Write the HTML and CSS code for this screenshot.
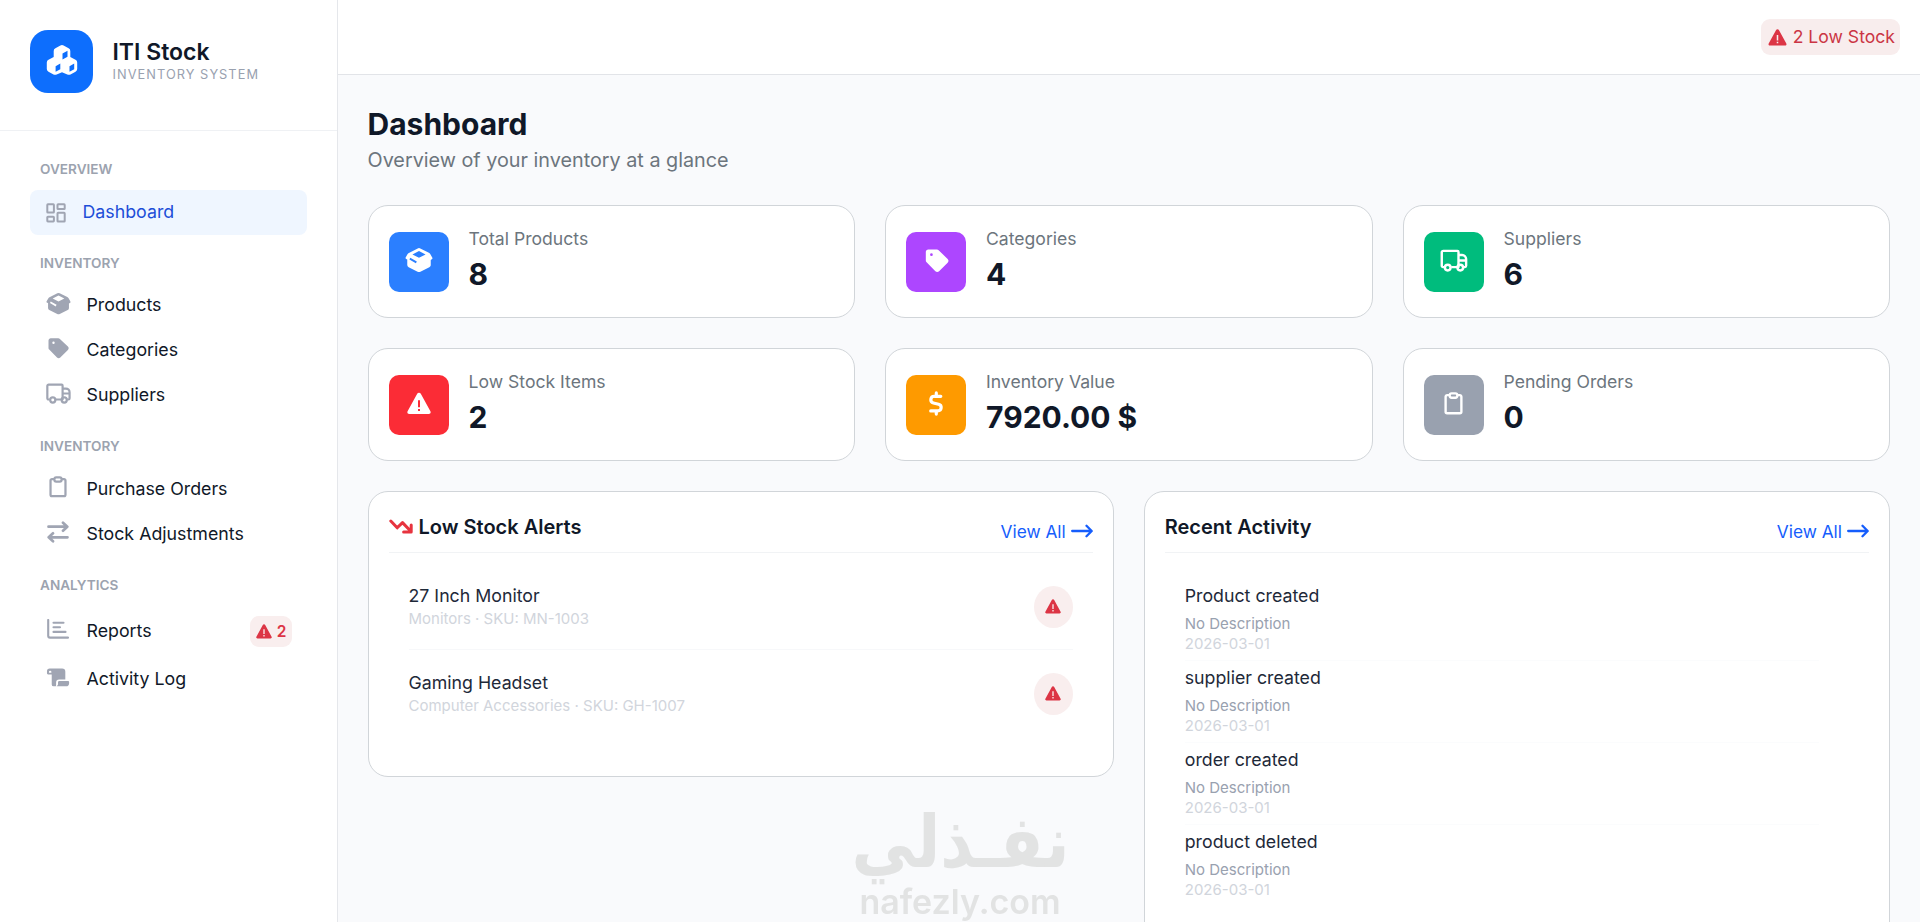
FILE: index.html
```html
<!DOCTYPE html>
<html lang="en">
<head>
    <meta charset="UTF-8">
    <meta name="viewport" content="width=device-width, initial-scale=1.0">
    <title>ITI Stock</title>
    <link rel="stylesheet" href="styles.css">
</head>
<body>
    <!-- icon sprite -->
    <svg class="sprite" aria-hidden="true">
        <symbol id="i-cubes" viewBox="0 0 32 30">
            <path fill-rule="evenodd" d="M14.400.5a3.400 3.400 0 0 1 3.200 0l5 2.700a3 3 0 0 1 1.700 2.700v6l5.200 2.800a3 3 0 0 1 1.700 2.700v6.600a3 3 0 0 1-1.700 2.700l-5 2.700a3.400 3.400 0 0 1-3.200 0L16 27.200l-5.300 2.200a3.400 3.400 0 0 1-3.200 0l-5-2.700A3 3 0 0 1 .8 24v-6.600a3 3 0 0 1 1.700-2.700l5.200-2.800v-6a3 3 0 0 1 1.700-2.700zM16.500 8.400v6l5-2.600v-6zM9.600 21.200v5.600l4.700-2.600v-5.600zM23.500 21.200v5.600l4.700-2.600v-5.600z"/>
        </symbol>
        <symbol id="i-grid" viewBox="0 0 20 20">
            <g fill="none" stroke="currentColor" stroke-width="2" stroke-linejoin="round"><rect x="1.300" y="1.300" width="6.600" height="8.200" rx=".6"/><rect x="11.500" y="1.300" width="7.200" height="4.700" rx=".6"/><rect x="1.300" y="13.700" width="6.600" height="4.700" rx=".6"/><rect x="11.500" y="9.800" width="7.200" height="8.700" rx=".6"/></g>
        </symbol>
        <symbol id="i-box" viewBox="0 0 26 24">
            <path fill-rule="evenodd" d="M11.800 1.300a2.400 2.400 0 0 1 2.400 0l8 4c.7.400 1.200.9 1.500 1.500l1.700 3.100c.3.600.1 1.200-.5 1.500l-1 .5v4.700c0 .9-.5 1.700-1.300 2.100l-8.300 4.200a2.800 2.800 0 0 1-2.600 0l-8.300-4.200a2.400 2.400 0 0 1-1.300-2.100v-5l-1-.5c-.6-.3-.8-.9-.5-1.500l1.700-2.900c.3-.5.700-.9 1.300-1.200zM13 3.600 6.900 6.800 13 10l6.100-3.200zM4.900 9.800l-.8 1.700 6 3.500.9-1.700z"/>
        </symbol>
        <symbol id="i-tag" viewBox="0 0 24 24">
            <path fill-rule="evenodd" d="M2.500 4.500C2.500 3.200 3.500 2.200 4.700 2.200h7.600c.6 0 1.200.2 1.600.700l8 7.700c1 1 1 2.400 0 3.400l-7.600 7.600c-1 .9-2.300.9-3.300 0l-7.800-8c-.5-.5-.7-1-.7-1.700zm5 1.100a1.200 1.200 0 1 0 0 2.400 1.200 1.200 0 0 0 0-2.400z"/>
        </symbol>
        <symbol id="i-truck" viewBox="0 0 26 22">
            <g fill="none" stroke="currentColor" stroke-width="2.300" stroke-linejoin="round"><path d="M3.600 17.300H2.500a1.200 1.200 0 0 1-1.200-1.200V3.200A1.400 1.400 0 0 1 2.700 1.800h13.600a1 1 0 0 1 1 1v14.500h-7M17.300 5.800h3.500a3.800 3.800 0 0 1 3.800 3.800v6.500a1.200 1.200 0 0 1-1.200 1.200h-1.200M17.300 11h7.300"/><circle cx="7" cy="17.800" r="2.700"/><circle cx="19" cy="17.800" r="2.700"/></g>
        </symbol>
        <symbol id="i-clip" viewBox="0 0 20 24">
            <g fill="none" stroke="currentColor" stroke-width="2.500" stroke-linejoin="round"><path d="M6 3.200H3.300A1.600 1.600 0 0 0 1.700 4.800v15.800a1.600 1.600 0 0 0 1.600 1.600h13.400a1.600 1.600 0 0 0 1.600-1.600V4.800a1.600 1.600 0 0 0-1.600-1.600H14"/><rect x="6" y="1.300" width="8" height="4.600" rx="2"/></g>
        </symbol>
        <symbol id="i-swap" viewBox="0 0 22 22">
            <path fill="none" stroke="currentColor" stroke-width="2.700" stroke-linecap="round" stroke-linejoin="round" d="M1.500 5.700h18M16 1.700l4.300 4-4.300 4M20.500 16.300h-18M6 12.300l-4.300 4 4.300 4"/>
        </symbol>
        <symbol id="i-chart" viewBox="0 0 22 20">
            <path fill="none" stroke="currentColor" stroke-width="2.100" stroke-linecap="round" stroke-linejoin="round" d="M1.200 1v15.800a1.800 1.800 0 0 0 1.800 1.800h18M6.500 3.700h10M6.500 8.300h6.500M6.500 12.900h12"/>
        </symbol>
        <symbol id="i-scroll" viewBox="0 0 24 20">
            <path fill-rule="evenodd" d="M3.300.4h13a3.400 3.400 0 0 1 3.400 3.400v8.400h-6.500a3.200 3.200 0 0 0-3.200 3.200v2.900a1 1 0 0 1-1 1H7.400a2 2 0 0 1-2-2V6.800H1.500A1.200 1.200 0 0 1 .4 5.600V3.300A2.900 2.900 0 0 1 3.300.4zm.4 2.400a1.200 1.200 0 0 0-1.200 1.200v1h2.500V4a1.200 1.200 0 0 0-1.300-1.200z"/>
            <path d="M13.400 13.800h9.300c.6 0 1 .4 1 1v1.200a3.300 3.300 0 0 1-3.300 3.300h-10c1.100-.6 1.600-1.400 1.600-2.400v-1.700c0-.8.500-1.400 1.400-1.400z"/>
        </symbol>
        <symbol id="i-alert" viewBox="0 0 24 22">
            <path fill-rule="evenodd" d="M13.800 1.300a2 2 0 0 0-3.600 0L.6 18.800c-.7 1.300.1 2.700 1.600 2.700h19.600c1.500 0 2.300-1.400 1.600-2.700zM11 7.800h2v7h-2zm0 8.600h2v2.200h-2z"/>
        </symbol>
        <symbol id="i-dollar" viewBox="0 0 16 26">
            <path fill="none" stroke="currentColor" stroke-width="3.300" stroke-linecap="round" stroke-linejoin="round" d="M13 5.500H6.200a3.500 3.500 0 0 0-.9 6.900l5.400 1.400a3.500 3.500 0 0 1-.8 6.900H2.500M8.300 2v3M8.300 21v3"/>
        </symbol>
        <symbol id="i-down" viewBox="0 0 24 16">
            <path fill="none" stroke="currentColor" stroke-width="3" stroke-linecap="round" stroke-linejoin="round" d="M1.800 2l6.400 6.800 5.300-5.200 8.300 8.600M22.200 6v7h-7.600"/>
        </symbol>
        <symbol id="i-arrow" viewBox="0 0 22 14">
            <path fill="none" stroke="currentColor" stroke-width="2.300" stroke-linecap="round" stroke-linejoin="round" d="M1.200 7h19.300M15.500 1.800 20.700 7 15.500 12.200"/>
        </symbol>
    </svg>

    <div class="layout">
        <aside class="sidebar">
            <div class="brand">
                <div class="brand-logo"><svg><use href="#i-cubes"/></svg></div>
                <div class="brand-text">
                    <div class="brand-name">ITI Stock</div>
                    <div class="brand-sub">INVENTORY SYSTEM</div>
                </div>
            </div>
            <nav class="menu">
                <div class="menu-title overview">OVERVIEW</div>
                <a class="menu-item active"><svg class="w20"><use href="#i-grid"/></svg>Dashboard</a>

                <div class="menu-title">INVENTORY</div>
                <a class="menu-item"><svg class="box"><use href="#i-box"/></svg>Products</a>
                <a class="menu-item"><svg class="tag"><use href="#i-tag"/></svg>Categories</a>
                <a class="menu-item"><svg class="truck"><use href="#i-truck"/></svg>Suppliers</a>

                <div class="menu-title orders">INVENTORY</div>
                <a class="menu-item"><svg class="clip"><use href="#i-clip"/></svg>Purchase Orders</a>
                <a class="menu-item"><svg class="swap"><use href="#i-swap"/></svg>Stock Adjustments</a>

                <div class="menu-title analytics">ANALYTICS</div>
                <a class="menu-item reports"><svg class="chart"><use href="#i-chart"/></svg>Reports
                    <span class="menu-badge"><svg><use href="#i-alert"/></svg>2</span></a>
                <a class="menu-item"><svg class="scroll"><use href="#i-scroll"/></svg>Activity Log</a>
            </nav>
        </aside>

        <div class="main">
            <header class="topbar">
                <span class="low-badge"><svg><use href="#i-alert"/></svg>2 Low Stock</span>
            </header>

            <main class="content">
                <h1 class="page-title">Dashboard</h1>
                <p class="page-sub">Overview of your inventory at a glance</p>

                <div class="stats">
                    <div class="stat">
                        <div class="stat-icon blue"><svg class="box"><use href="#i-box"/></svg></div>
                        <div><div class="stat-label">Total Products</div><div class="stat-value">8</div></div>
                    </div>
                    <div class="stat">
                        <div class="stat-icon purple"><svg class="tag"><use href="#i-tag"/></svg></div>
                        <div><div class="stat-label">Categories</div><div class="stat-value">4</div></div>
                    </div>
                    <div class="stat">
                        <div class="stat-icon green"><svg class="truck"><use href="#i-truck"/></svg></div>
                        <div><div class="stat-label">Suppliers</div><div class="stat-value">6</div></div>
                    </div>
                    <div class="stat">
                        <div class="stat-icon red"><svg class="alert"><use href="#i-alert"/></svg></div>
                        <div><div class="stat-label">Low Stock Items</div><div class="stat-value">2</div></div>
                    </div>
                    <div class="stat">
                        <div class="stat-icon orange"><svg class="dollar"><use href="#i-dollar"/></svg></div>
                        <div><div class="stat-label">Inventory Value</div><div class="stat-value">7920.00 $</div></div>
                    </div>
                    <div class="stat">
                        <div class="stat-icon gray"><svg class="clip"><use href="#i-clip"/></svg></div>
                        <div><div class="stat-label">Pending Orders</div><div class="stat-value">0</div></div>
                    </div>
                </div>

                <div class="panels">
                    <section class="panel">
                        <div class="panel-head">
                            <h2><svg><use href="#i-down"/></svg>Low Stock Alerts</h2>
                            <a class="view-all">View All<svg><use href="#i-arrow"/></svg></a>
                        </div>
                        <div class="alerts">
                            <div class="alert-row">
                                <div>
                                    <div class="row-title">27 Inch Monitor</div>
                                    <div class="row-sub">Monitors · SKU: MN-1003</div>
                                </div>
                                <span class="row-badge"><svg><use href="#i-alert"/></svg></span>
                            </div>
                            <div class="alert-row">
                                <div>
                                    <div class="row-title">Gaming Headset</div>
                                    <div class="row-sub">Computer Accessories · SKU: GH-1007</div>
                                </div>
                                <span class="row-badge"><svg><use href="#i-alert"/></svg></span>
                            </div>
                        </div>
                    </section>

                    <section class="panel">
                        <div class="panel-head">
                            <h2>Recent Activity</h2>
                            <a class="view-all">View All<svg><use href="#i-arrow"/></svg></a>
                        </div>
                        <div class="activity">
                            <div class="activity-row">
                                <div class="row-title">Product created</div>
                                <div class="row-desc">No Description</div>
                                <div class="row-date">2026-03-01</div>
                            </div>
                            <div class="activity-row">
                                <div class="row-title">supplier created</div>
                                <div class="row-desc">No Description</div>
                                <div class="row-date">2026-03-01</div>
                            </div>
                            <div class="activity-row">
                                <div class="row-title">order created</div>
                                <div class="row-desc">No Description</div>
                                <div class="row-date">2026-03-01</div>
                            </div>
                            <div class="activity-row">
                                <div class="row-title">product deleted</div>
                                <div class="row-desc">No Description</div>
                                <div class="row-date">2026-03-01</div>
                            </div>
                        </div>
                    </section>
                </div>
            </main>
        </div>
    </div>

    <div class="watermark">
        <div class="wm-ar" lang="ar" dir="rtl">نفـذلي</div>
        <div class="wm-en">nafezly.com</div>
    </div>
</body>
</html>
```
FILE: styles.css
```css
* {
    box-sizing: border-box;
}

body {
    margin: 0;
    height: 100vh;
    overflow: hidden;
    font-family: Inter, "Liberation Sans", sans-serif;
    font-size: 17.6px;
    line-height: 1.5;
    color: #101828;
    background: #f9fafc;
}

svg {
    fill: currentColor;
    flex-shrink: 0;
}

.sprite {
    display: none;
}

.layout {
    display: flex;
    height: 100vh;
    overflow: hidden;
}

/* Sidebar */
.sidebar {
    width: 337.5px;
    flex-shrink: 0;
    background: #fff;
    border-right: 1px solid #e5e7eb;
}

.brand {
    display: flex;
    gap: 19.5px;
    height: 131px;
    padding: 30px;
    border-bottom: 1px solid #eff1f4;
}

.brand-logo {
    display: flex;
    align-items: center;
    justify-content: center;
    width: 63px;
    height: 63px;
    padding-bottom: 3px;
    border-radius: 18px;
    background: #0d6efd;
    color: #fff;
}

.brand-logo svg {
    width: 32px;
    height: 30px;
}

.brand-text {
    padding-top: 8px;
}

.brand-name {
    font-size: 23px;
    font-weight: 600;
    line-height: 28px;
}

.brand-sub {
    font-size: 12.8px;
    line-height: 17px;
    letter-spacing: 1.05px;
    color: #99a1af;
}

.menu {
    padding: 12px 30px;
}

.menu-title {
    height: 47px;
    padding: 18px 10px 0;
    font-size: 13.6px;
    font-weight: 600;
    line-height: 21px;
    color: #9ca3af;
}

.menu-title.overview {
    padding-top: 16px;
}

.menu-title.orders,
.menu-title.analytics {
    height: 49px;
    padding-top: 19px;
}

.menu-item {
    display: flex;
    align-items: center;
    height: 45px;
    padding: 1px 16px 0;
    border-radius: 8px;
    font-size: 17.8px;
}

.menu-item > svg {
    color: #a0a5b3;
    margin-top: -4px;
}

.menu-item.active {
    padding: 0 16px 1px;
    background: #eff6ff;
    color: #1d4ed8;
}

.menu-item.reports {
    height: 51px;
}

.w20 {
    width: 20px;
    height: 20px;
    margin-right: 16.5px;
}

.menu-item > .w20 {
    margin-top: 2px;
}

.box {
    width: 25px;
    height: 23px;
    margin-right: 15.5px;
}

.tag {
    width: 24px;
    height: 24px;
    margin-right: 16.5px;
}

.truck {
    width: 25px;
    height: 21px;
    margin-right: 15.5px;
}

.clip {
    width: 18px;
    height: 22px;
    margin: 0 19.5px 0 3px;
}

.swap {
    width: 22px;
    height: 22px;
    margin: 0 17.5px 0 1px;
}

.chart {
    width: 22px;
    height: 20px;
    margin: 0 17.5px 0 1px;
}

.scroll {
    width: 24px;
    height: 19px;
    margin-right: 16.5px;
}

.menu-badge {
    display: flex;
    align-items: center;
    gap: 5px;
    height: 31px;
    margin-left: auto;
    margin-right: -1px;
    padding: 1px 5px 0 6px;
    border-radius: 9px;
    background: #f9eeee;
    color: #dc3545;
    font-size: 15.5px;
    font-weight: 600;
}

.menu-badge svg {
    width: 16px;
    height: 15px;
}

/* Main column */
.main {
    flex: 1;
    min-width: 0;
}

.topbar {
    display: flex;
    justify-content: flex-end;
    align-items: center;
    height: 75px;
    padding: 0 20px;
    background: #fff;
    border-bottom: 1px solid #e2e4e8;
}

.low-badge {
    display: flex;
    align-items: center;
    gap: 6px;
    height: 36px;
    padding: 0 5px 0 7px;
    border-radius: 9px;
    background: #f8eded;
    color: #cb3544;
}

.low-badge svg {
    width: 19px;
    height: 17px;
    color: #dc3545;
}

.content {
    padding: 30px;
}

.page-title {
    margin: -1px 0 1px;
    font-size: 30px;
    font-weight: 700;
    line-height: 40px;
}

.page-sub {
    margin: 0 0 30px;
    font-size: 19.8px;
    line-height: 30px;
    color: #6c757d;
}

.stats {
    display: grid;
    grid-template-columns: repeat(3, 1fr);
    gap: 30px;
}

.stat {
    display: flex;
    align-items: center;
    gap: 20px;
    height: 113px;
    padding: 0 20px;
    border: 1px solid #d1d5d9;
    border-radius: 20px;
    background: #fff;
}

.stat-icon {
    display: flex;
    align-items: center;
    justify-content: center;
    width: 60px;
    height: 60px;
    padding-bottom: 3px;
    border-radius: 10px;
    color: #fff;
}

.stat-icon svg {
    margin: 0;
}

.blue { background: #2b7fff; }
.purple { background: #ad46ff; }
.green { background: #00bc7d; }
.red { background: #fb2c36; }
.orange { background: #fe9a00; }
.gray { background: #99a1af; }

.stat-icon .box {
    width: 28px;
    height: 26px;
}

.stat-icon .tag {
    width: 27px;
    height: 27px;
}

.stat-icon .truck {
    width: 28px;
    height: 23px;
}

.alert {
    width: 24px;
    height: 23px;
}

.dollar {
    width: 16px;
    height: 25px;
}

.stat-icon .clip {
    width: 19px;
    height: 25px;
}

.stat-label {
    line-height: 26px;
    color: #6c757d;
}

.stat-value {
    margin-bottom: 2px;
    font-size: 30px;
    font-weight: 700;
    line-height: 44px;
}

/* Panels */
.panels {
    display: grid;
    grid-template-columns: 1fr 1fr;
    align-items: start;
    gap: 30px;
    margin-top: 30px;
}

.panel {
    padding: 20px 20px 40px;
    border: 1px solid #d1d5d9;
    border-radius: 20px;
    background: #fff;
}

.panel-head {
    display: flex;
    justify-content: space-between;
    height: 41px;
    border-bottom: 1px solid #f1f3f5;
}

.panel-head h2 {
    display: flex;
    align-items: center;
    gap: 6px;
    height: 30px;
    margin: 0;
    font-size: 20px;
    font-weight: 600;
}

.panel-head h2 svg {
    width: 24px;
    height: 16px;
    color: #e7343f;
}

.view-all {
    display: flex;
    align-items: center;
    gap: 5px;
    height: 40px;
    color: #155dfc;
    font-size: 17.3px;
}

.view-all svg {
    width: 22px;
    height: 14px;
    margin-top: -2px;
}

.alerts {
    padding: 20px 20px 0;
}

.alert-row {
    display: flex;
    justify-content: space-between;
    height: 76px;
    padding: 9px 0 0;
}

.alert-row + .alert-row {
    height: 87px;
    padding-top: 19px;
    border-top: 1px solid #f7f8fa;
}

.row-title {
    font-size: 17.75px;
    line-height: 27px;
    color: #1e2939;
}

.row-sub {
    font-size: 15px;
    line-height: 20px;
    color: #d1d5dc;
}

.row-badge {
    display: flex;
    align-items: center;
    justify-content: center;
    width: 39px;
    height: 42px;
    margin-top: 4px;
    border-radius: 50%;
    background: #f9eeee;
    color: #dc3545;
}

.row-badge svg {
    width: 16px;
    height: 15px;
    margin-top: -2px;
}

.activity {
    padding: 20px 50px 0 20px;
}

.activity-row {
    height: 87px;
    padding-top: 9px;
}

.activity-row + .activity-row {
    height: 82px;
    padding-top: 3px;
    border-top: 1px solid #fbfcfd;
}

.row-desc {
    margin-top: 5px;
    font-size: 15px;
    line-height: 20px;
    color: #99a1af;
}

.row-date {
    font-size: 15px;
    line-height: 20px;
    color: #d1d5dc;
}

/* Watermark over the page */
.watermark {
    position: fixed;
    left: 850px;
    top: 797px;
    display: flex;
    flex-direction: column;
    align-items: center;
    width: 220px;
    color: #e2e3e3;
    white-space: nowrap;
}

.wm-ar {
    height: 83px;
    font-family: "DejaVu Sans", sans-serif;
    font-size: 72px;
    font-weight: 700;
    line-height: 90px;
    transform: scaleX(.89);
}

.wm-en {
    font-size: 34px;
    font-weight: 600;
    line-height: 44px;
}
```
